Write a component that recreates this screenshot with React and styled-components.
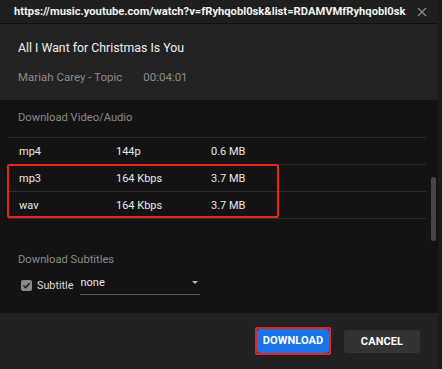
import React from "react";
import styled, { createGlobalStyle } from "styled-components";

const Global = createGlobalStyle`
  html, body { margin: 0; padding: 0; background: #1b1b1b; }
  body { font-family: Roboto, "Noto Sans", Arial, sans-serif; }
  * { box-sizing: border-box; }
`;

const Dialog = styled.div`
  width: 442px;
  height: 369px;
  display: flex;
  flex-direction: column;
  background: #212121;
  color: #fff;
  overflow: hidden;
  border-right: 4px solid #1a1a1a;
`;

const Header = styled.div`
  height: 24px;
  display: flex;
  align-items: center;
  justify-content: space-between;
  padding: 0 10px 0 14px;
  background: #1e1e1e;
  border-bottom: 1px solid #0e0e0e;
`;

const Url = styled.div`
  font-size: 11.2px;
  font-weight: 700;
  color: #f2f2f2;
  white-space: nowrap;
`;

const Close = styled.div`
  width: 12px;
  height: 12px;
  display: flex;
  align-items: center;
  justify-content: center;
  margin-top: 1px;
`;

const Info = styled.div`
  height: 76px;
  padding: 15px 18px 0;
  background: #222222;
`;

const Title = styled.div`
  font-size: 12.3px;
  color: #f0f0f0;
  line-height: 18px;
`;

const Meta = styled.div`
  display: flex;
  gap: 21px;
  margin-top: 12px;
  font-size: 11.5px;
  color: #8c8c8c;
  line-height: 16px;
`;

const Body = styled.div`
  flex: 1;
  background: #131313;
  position: relative;
  padding: 9px 0 0 0;
`;

const SectionLabel = styled.div`
  font-size: 11.2px;
  color: #8a8a8a;
  padding-left: 18px;
  line-height: 18px;
  margin-top: ${(p) => p.$mt || 0}px;
`;

const Table = styled.div`
  margin: 10px 8px 0 8px;
  width: 418px;
  border-top: 1px solid #2c2c2c;
  position: relative;
`;

const Row = styled.div`
  display: grid;
  grid-template-columns: 97px 95px 1fr;
  height: 27px;
  align-items: center;
  padding-left: 11px;
  border-bottom: 1px solid #2c2c2c;
  font-size: 11px;
  color: #e8e8e8;
`;

const Highlight = styled.div`
  position: absolute;
  left: -1px;
  top: 26px;
  width: 272px;
  height: 54px;
  border: 2px solid #e8251d;
  border-radius: 2px;
  pointer-events: none;
`;

const Scrollbar = styled.div`
  position: absolute;
  right: 2px;
  top: 77px;
  width: 5px;
  height: 64px;
  border-radius: 3px;
  background: #454545;
`;

const SubRow = styled.div`
  display: flex;
  align-items: center;
  padding-left: 21px;
  margin-top: 6px;
  height: 20px;
`;

const Check = styled.div`
  width: 11px;
  height: 11px;
  border-radius: 2px;
  background: #8a8a8a;
  display: flex;
  align-items: center;
  justify-content: center;
`;

const SubLabel = styled.div`
  font-size: 10.8px;
  color: #dcdcdc;
  margin-left: 5px;
`;

const Select = styled.div`
  margin-left: 7px;
  width: 120px;
  height: 20px;
  border-bottom: 1px solid #5a5a5a;
  display: flex;
  align-items: center;
  justify-content: space-between;
  padding: 0 1px 4px 0;
  font-size: 11px;
  color: #e8e8e8;
  position: relative;
  top: 0px;
`;

const Caret = styled.div`
  width: 0;
  height: 0;
  border-left: 3.5px solid transparent;
  border-right: 3.5px solid transparent;
  border-top: 3.5px solid #bdbdbd;
  margin-right: 1px;
`;

const Footer = styled.div`
  height: 56px;
  background: #212121;
  display: flex;
  align-items: center;
  justify-content: flex-end;
  gap: 12px;
  padding-right: 18px;
`;

const Button = styled.button`
  height: ${(p) => p.$h || 24}px;
  padding: 0;
  width: ${(p) => p.$w}px;
  border: none;
  border-radius: 3px;
  font-family: Roboto, Arial, sans-serif;
  font-size: 11px;
  font-weight: 700;
  color: #fff;
  background: ${(p) => p.$bg};
  display: flex;
  align-items: center;
  justify-content: center;
  letter-spacing: 0.1px;
`;

const Outline = styled.div`
  border: 2px solid #e8251d;
  border-radius: 2px;
  margin-right: 1px;
  margin-top: -1px;
`;

const rows = [
  ["mp4", "144p", "0.6 MB"],
  ["mp3", "164 Kbps", "3.7 MB"],
  ["wav", "164 Kbps", "3.7 MB"],
];

export default function App() {
  return (
    <>
      <Global />
      <Dialog>
        <Header>
          <Url>https://music.youtube.com/watch?v=fRyhqobl0sk&amp;list=RDAMVMfRyhqobl0sk</Url>
          <Close>
            <svg width="10" height="10" viewBox="0 0 10 10">
              <path d="M1 1L9 9M9 1L1 9" stroke="#8a8a8a" strokeWidth="1.2" />
            </svg>
          </Close>
        </Header>
        <Info>
          <Title>All I Want for Christmas Is You</Title>
          <Meta>
            <span>Mariah Carey - Topic</span>
            <span>00:04:01</span>
          </Meta>
        </Info>
        <Body>
          <SectionLabel>Download Video/Audio</SectionLabel>
          <Table>
            {rows.map((r, i) => (
              <Row key={i}>
                <span>{r[0]}</span>
                <span>{r[1]}</span>
                <span>{r[2]}</span>
              </Row>
            ))}
            <Highlight />
          </Table>
          <Scrollbar />
          <SectionLabel $mt={32}>Download Subtitles</SectionLabel>
          <SubRow>
            <Check>
              <svg width="9" height="9" viewBox="0 0 9 9">
                <path d="M1.5 4.6L3.6 6.7L7.6 2.2" fill="none" stroke="#1b1b1b" strokeWidth="1.4" />
              </svg>
            </Check>
            <SubLabel>Subtitle</SubLabel>
            <Select>
              <span>none</span>
              <Caret />
            </Select>
          </SubRow>
        </Body>
        <Footer>
          <Outline>
            <Button $w={72} $bg="#1a73e8">DOWNLOAD</Button>
          </Outline>
          <Button $w={76} $h={23} $bg="#333333">CANCEL</Button>
        </Footer>
      </Dialog>
    </>
  );
}
